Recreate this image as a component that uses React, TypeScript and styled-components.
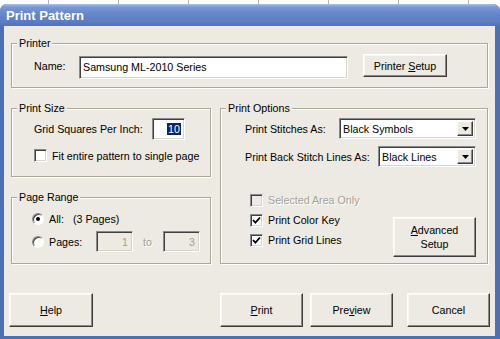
import React from 'react';
import styled, { createGlobalStyle } from 'styled-components';

const FACE = '#eceae2';

const GlobalStyle = createGlobalStyle`
  html, body {
    margin: 0;
    padding: 0;
    background: #fff;
  }
  body {
    font-family: "Liberation Sans", Arial, sans-serif;
    font-size: 10.7px;
    color: #000;
  }
  * {
    box-sizing: border-box;
  }
`;

const Screen = styled.div`
  width: 500px;
  height: 339px;
  overflow: hidden;
  display: flex;
  flex-direction: column;
`;

const Desktop = styled.div`
  flex: none;
  height: 4px;
  background-color: #fff;
  background-image: linear-gradient(to right, #b4b4b4 1px, transparent 1px);
  background-size: 70px 4px;
  background-position: 48px 0;
`;

const Frame = styled.div`
  flex: 1;
  display: flex;
  flex-direction: column;
  background: #4d6fb4;
  border-radius: 7px 7px 0 0;
  overflow: hidden;
  padding: 0 5px 3px 4px;
`;

const TitleBar = styled.div`
  flex: none;
  height: 22px;
  margin: 0 -5px 0 -4px;
  padding-left: 6px;
  display: flex;
  align-items: center;
  color: #fff;
  font-weight: bold;
  font-size: 13px;
  background: linear-gradient(
    to bottom,
    #a9c1ea 0px,
    #7a98d6 3px,
    #6586c8 10px,
    #5b7cc1 18px,
    #5272b8 22px
  );
`;

const Client = styled.div`
  flex: 1;
  background: ${FACE};
  padding: 17px 7px 0 7px;
  display: flex;
  flex-direction: column;
`;

const Group = styled.div<{ $h: number }>`
  position: relative;
  height: ${(p) => p.$h}px;
  border: 1px solid #aca899;
  box-shadow: inset 1px 1px 0 #fff, 1px 1px 0 #fff;
`;

const GroupLabel = styled.span`
  position: absolute;
  top: -7px;
  left: 5px;
  padding: 0 2px;
  line-height: 13px;
  background: ${FACE};
`;

const PrinterRow = styled.div`
  height: 100%;
  display: flex;
  align-items: center;
  padding-left: 22px;
`;

const Label = styled.span<{ $w?: number }>`
  flex: none;
  white-space: nowrap;
  width: ${(p) => (p.$w ? `${p.$w}px` : 'auto')};
`;

const Sunken = styled.div<{ $w: number; $h: number; $disabled?: boolean }>`
  flex: none;
  width: ${(p) => p.$w}px;
  height: ${(p) => p.$h}px;
  display: flex;
  align-items: center;
  background: ${(p) => (p.$disabled ? FACE : '#fff')};
  border: 1px solid;
  border-color: #8a8a8a #fff #fff #8a8a8a;
  box-shadow: inset 1px 1px 0 #404040, inset -1px -1px 0 #d8d6cc;
  white-space: nowrap;
  overflow: hidden;
`;

const FieldText = styled.span`
  padding-left: 3px;
`;

const NumberText = styled.span<{ $disabled?: boolean }>`
  margin-left: auto;
  margin-right: 3px;
  padding: 0 1px;
  line-height: 12px;
  color: ${(p) => (p.$disabled ? '#a3a199' : '#fff')};
  background: ${(p) => (p.$disabled ? 'transparent' : '#0a246a')};
`;

const Button = styled.div<{ $w: number; $h: number; $ml?: number }>`
  flex: none;
  width: ${(p) => p.$w}px;
  height: ${(p) => p.$h}px;
  margin-left: ${(p) => p.$ml ?? 0}px;
  display: flex;
  align-items: center;
  justify-content: center;
  text-align: center;
  line-height: 14px;
  background: ${FACE};
  border: 1px solid;
  border-color: #fff #3c3c3c #3c3c3c #fff;
  box-shadow: inset -1px -1px 0 #8a8a8a, inset 1px 1px 0 #f8f7f2;
`;

const U = styled.span`
  text-decoration: underline;
`;

const Middle = styled.div`
  margin-top: 20px;
  display: grid;
  grid-template-columns: 200px 268px;
  grid-template-rows: 69px 67px;
  column-gap: 9px;
  row-gap: 20px;
`;

const SizeBody = styled.div`
  padding: 9px 0 0 22px;
  display: flex;
  flex-direction: column;
`;

const Row = styled.div<{ $mt?: number; $h?: number }>`
  display: flex;
  align-items: center;
  margin-top: ${(p) => p.$mt ?? 0}px;
  height: ${(p) => (p.$h ? `${p.$h}px` : 'auto')};
`;

const Box = styled.span<{ $disabled?: boolean }>`
  flex: none;
  width: 13px;
  height: 13px;
  display: flex;
  align-items: center;
  justify-content: center;
  background: ${(p) => (p.$disabled ? FACE : '#fff')};
  border: 1px solid;
  border-color: #8a8a8a #fff #fff #8a8a8a;
  box-shadow: inset 1px 1px 0 #404040, inset -1px -1px 0 #d8d6cc;
  margin-right: 5px;
`;

const Radio = styled.span`
  flex: none;
  width: 12px;
  height: 12px;
  border-radius: 50%;
  display: flex;
  align-items: center;
  justify-content: center;
  background: #fff;
  border: 1px solid;
  border-color: #8a8a8a #fff #fff #8a8a8a;
  box-shadow: inset 1px 1px 0 #404040;
  margin-right: 5px;
`;

const Dot = styled.span`
  width: 4px;
  height: 4px;
  border-radius: 50%;
  background: #000;
`;

const DimText = styled.span`
  color: #a3a199;
  text-shadow: 1px 1px 0 #fff;
`;

const RangeBody = styled.div`
  padding: 10px 0 0 20px;
  display: flex;
  flex-direction: column;
`;

const OptionsGroup = styled(Group)`
  grid-column: 2;
  grid-row: 1 / span 2;
`;

const OptionsBody = styled.div`
  padding: 9px 11px 0 24px;
  display: flex;
  flex-direction: column;
`;

const Combo = styled(Sunken)`
  justify-content: space-between;
`;

const DropButton = styled.span`
  flex: none;
  width: 16px;
  height: calc(100% - 4px);
  margin-right: 2px;
  display: flex;
  align-items: center;
  justify-content: center;
  background: ${FACE};
  border: 1px solid;
  border-color: #fff #3c3c3c #3c3c3c #fff;
  box-shadow: inset -1px -1px 0 #8a8a8a;
`;

const Checks = styled.div`
  display: flex;
  align-items: flex-start;
  margin-top: 23px;
  padding-left: 5px;
`;

const CheckList = styled.div`
  display: flex;
  flex-direction: column;
`;

const Footer = styled.div`
  display: flex;
  margin: 29px -2px 0 -2px;
`;

const Check = () => (
  <svg width="9" height="9" viewBox="0 0 9 9">
    <polyline points="1,4 3.4,6.6 8,1.5" fill="none" stroke="#000" strokeWidth="1.8" />
  </svg>
);

const Arrow = () => (
  <svg width="7" height="4" viewBox="0 0 7 4">
    <polygon points="0,0 7,0 3.5,4" fill="#000" />
  </svg>
);

const CheckItem: React.FC<{ checked?: boolean; disabled?: boolean; children: React.ReactNode }> = ({
  checked,
  disabled,
  children,
}) => (
  <Row $h={20}>
    <Box $disabled={disabled}>{checked && <Check />}</Box>
    {disabled ? <DimText>{children}</DimText> : <span>{children}</span>}
  </Row>
);

export default function App() {
  return (
    <Screen>
      <GlobalStyle />
      <Desktop />
      <Frame>
        <TitleBar>Print Pattern</TitleBar>
        <Client>
          <Group $h={45}>
            <GroupLabel>Printer</GroupLabel>
            <PrinterRow>
              <Label $w={45}>Name:</Label>
              <Sunken $w={269} $h={23} style={{ marginTop: 3 }}>
                <FieldText>Samsung ML-2010 Series</FieldText>
              </Sunken>
              <Button $w={84} $h={23} $ml={15}>
                <span>
                  Printer <U>S</U>etup
                </span>
              </Button>
            </PrinterRow>
          </Group>

          <Middle>
            <Group $h={69}>
              <GroupLabel>Print Size</GroupLabel>
              <SizeBody>
                <Row>
                  <Label $w={118}>Grid Squares Per Inch:</Label>
                  <Sunken $w={33} $h={22}>
                    <NumberText>10</NumberText>
                  </Sunken>
                </Row>
                <Row $mt={9}>
                  <Box />
                  <span>Fit entire pattern to single page</span>
                </Row>
              </SizeBody>
            </Group>

            <OptionsGroup $h={156}>
              <GroupLabel>Print Options</GroupLabel>
              <OptionsBody>
                <Row>
                  <Label $w={94}>Print Stitches As:</Label>
                  <Combo $w={137} $h={21}>
                    <FieldText>Black Symbols</FieldText>
                    <DropButton>
                      <Arrow />
                    </DropButton>
                  </Combo>
                </Row>
                <Row $mt={7}>
                  <Label $w={133}>Print Back Stitch Lines As:</Label>
                  <Combo $w={98} $h={21}>
                    <FieldText>Black Lines</FieldText>
                    <DropButton>
                      <Arrow />
                    </DropButton>
                  </Combo>
                </Row>
                <Checks>
                  <CheckList>
                    <CheckItem disabled>Selected Area Only</CheckItem>
                    <CheckItem checked>Print Color Key</CheckItem>
                    <CheckItem checked>Print Grid Lines</CheckItem>
                  </CheckList>
                  <Button $w={83} $h={40} style={{ marginLeft: 'auto', marginTop: 27 }}>
                    <span>
                      <U>A</U>dvanced
                      <br />
                      Setup
                    </span>
                  </Button>
                </Checks>
              </OptionsBody>
            </OptionsGroup>

            <Group $h={67}>
              <GroupLabel>Page Range</GroupLabel>
              <RangeBody>
                <Row $h={21}>
                  <Radio>
                    <Dot />
                  </Radio>
                  <Label $w={24}>All:</Label>
                  <span>(3 Pages)</span>
                </Row>
                <Row $h={21} $mt={2}>
                  <Radio />
                  <Label $w={47}>Pages:</Label>
                  <Sunken $w={37} $h={21} $disabled>
                    <NumberText $disabled>1</NumberText>
                  </Sunken>
                  <Label $w={30} style={{ paddingLeft: 10 }}>
                    <DimText>to</DimText>
                  </Label>
                  <Sunken $w={37} $h={21} $disabled>
                    <NumberText $disabled>3</NumberText>
                  </Sunken>
                </Row>
              </RangeBody>
            </Group>
          </Middle>

          <Footer>
            <Button $w={84} $h={34}>
              <span>
                <U>H</U>elp
              </span>
            </Button>
            <Button $w={83} $h={34} $ml={127}>
              <span>
                <U>P</U>rint
              </span>
            </Button>
            <Button $w={83} $h={34} $ml={7}>
              <span>
                Pre<U>v</U>iew
              </span>
            </Button>
            <Button $w={83} $h={34} $ml={14}>
              Cancel
            </Button>
          </Footer>
        </Client>
      </Frame>
    </Screen>
  );
}
